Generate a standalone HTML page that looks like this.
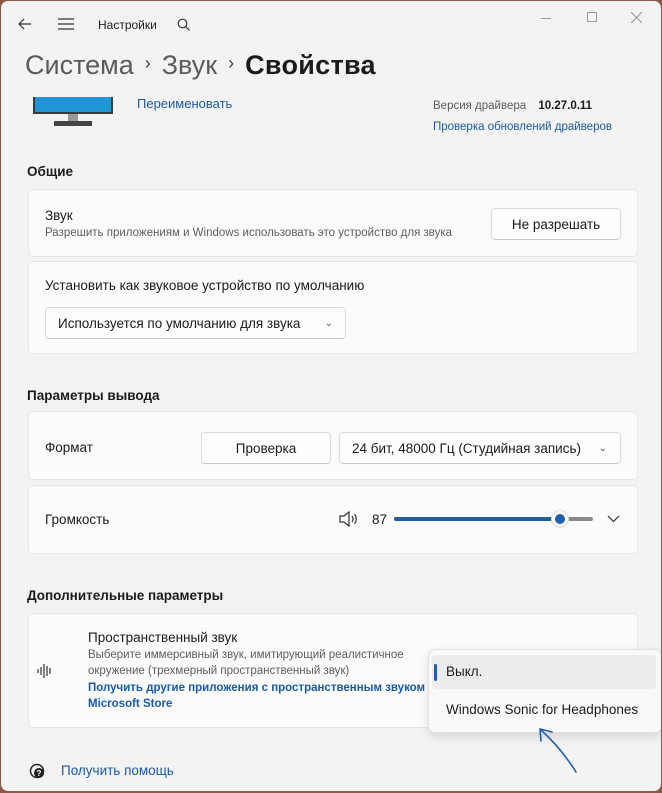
<!DOCTYPE html>
<html><head><meta charset="utf-8"><style>
*{margin:0;padding:0;box-sizing:border-box}
body{width:662px;height:793px;overflow:hidden;background:#8a5a44;font-family:"Liberation Sans",sans-serif;}
.win{position:absolute;left:1px;top:1px;width:660px;height:790px;background:#f3f3f3;border-radius:7px;overflow:hidden}
.a{position:absolute;white-space:nowrap}
.card{position:absolute;left:27px;width:610px;background:#fbfbfb;border:1px solid #e5e5e5;border-radius:5px}
.btn{position:absolute;background:#fdfdfd;border:1px solid #d9d9d9;border-bottom-color:#c8c8c8;border-radius:4px;font-size:13.5px;color:#1b1b1b;display:flex;align-items:center;justify-content:center}
.h{font-size:13.5px;font-weight:bold;color:#1b1b1b}
.t{font-size:13.5px;color:#1b1b1b}
.s{font-size:11.5px;color:#5d5d5d}
.l{color:#1a5aa8}
.chev{font-size:18px;position:relative;top:-5px;margin:0 11px;color:#444}
</style></head><body><div class="win">
<svg class="a" style="left:17px;top:16px" width="14" height="14" viewBox="0 0 14 14"><path d="M13 7H1M6 2L1 7l5 5" fill="none" stroke="#333" stroke-width="1.2"/></svg>
<svg class="a" style="left:57px;top:17px" width="16" height="12"><path d="M0 1h16M0 6h16M0 11h16" stroke="#333" stroke-width="1.2"/></svg>
<div class="a" style="left:97px;top:17px;font-size:12px;color:#1b1b1b">Настройки</div>
<svg class="a" style="left:176px;top:17px" width="13" height="13"><circle cx="5.5" cy="5.5" r="4.3" fill="none" stroke="#333" stroke-width="1.2"/><path d="M8.5 8.5l4 4" stroke="#333" stroke-width="1.2"/></svg>
<div class="a" style="left:540px;top:17px;width:10px;height:1px;background:#999"></div>
<div class="a" style="left:586px;top:11px;width:10px;height:10px;border:1px solid #999"></div>
<svg class="a" style="left:630px;top:11px" width="11" height="11"><path d="M0 0l11 11M11 0L0 11" stroke="#999"/></svg>
<div class="a" style="left:24px;top:49px;font-size:27px;color:#5b5b5b">Система<span class="chev">›</span>Звук<span class="chev">›</span><span style="color:#1b1b1b;font-weight:bold;letter-spacing:0.3px">Свойства</span></div>
<div class="a" style="left:32px;top:96px;width:80px;height:17px;background:#1e96d6;border:2px solid #3a3a3a;border-top:none"></div>
<div class="a" style="left:67px;top:113px;width:10px;height:8px;background:#999"></div>
<div class="a" style="left:53px;top:120px;width:38px;height:5px;background:#444"></div>
<div class="a l" style="left:136px;top:95px;font-size:13px">Переименовать</div>
<div class="a" style="left:432px;top:99px;font-size:11.5px;color:#5d5d5d">Версия драйвера <b style="color:#1b1b1b;margin-left:9px">10.27.0.11</b></div>
<div class="a l" style="left:432px;top:120px;font-size:11.5px">Проверка обновлений драйверов</div>
<div class="a h" style="left:26px;top:163px">Общие</div>
<div class="card" style="top:188px;height:68px"></div>
<div class="a t" style="left:44px;top:207px">Звук</div>
<div class="a s" style="left:44px;top:226px">Разрешить приложениям и Windows использовать это устройство для звука</div>
<div class="btn" style="left:490px;top:207px;width:130px;height:32px">Не разрешать</div>
<div class="card" style="top:260px;height:93px"></div>
<div class="a t" style="left:44px;top:277px">Установить как звуковое устройство по умолчанию</div>
<div class="btn" style="left:44px;top:306px;width:301px;height:32px;justify-content:flex-start;padding-left:12px">Используется по умолчанию для звука<span style="position:absolute;right:12px;font-size:10px;color:#555">⌄</span></div>
<div class="a h" style="left:26px;top:387px">Параметры вывода</div>
<div class="card" style="top:410px;height:69px"></div>
<div class="a t" style="left:44px;top:439px">Формат</div>
<div class="btn" style="left:200px;top:431px;width:130px;height:32px">Проверка</div>
<div class="btn" style="left:338px;top:431px;width:282px;height:32px;justify-content:flex-start;padding-left:12px">24 бит, 48000 Гц (Студийная запись)<span style="position:absolute;right:13px;font-size:10px;color:#555">⌄</span></div>
<div class="card" style="top:484px;height:69px"></div>
<div class="a t" style="left:44px;top:511px">Громкость</div>
<svg class="a" style="left:338px;top:510px" width="20" height="16"><path d="M1 5h4l5-4v14l-5-4H1z" fill="none" stroke="#333" stroke-width="1.2"/><path d="M13 5q2 3 0 6M15.5 3q3.5 5 0 10" fill="none" stroke="#333" stroke-width="1.2"/></svg>
<div class="a t" style="left:371px;top:511px">87</div>
<div class="a" style="left:393px;top:516px;width:199px;height:4px;background:#8a8a8a;border-radius:2px"></div>
<div class="a" style="left:393px;top:516px;width:166px;height:4px;background:#1f5fa8;border-radius:2px"></div>
<div class="a" style="left:550px;top:509px;width:18px;height:18px;border-radius:50%;background:#fff;border:1px solid #ddd"></div>
<div class="a" style="left:554px;top:513px;width:10px;height:10px;border-radius:50%;background:#1f5fa8"></div>
<svg class="a" style="left:606px;top:514px" width="13" height="8"><path d="M1 1l5.5 5.5L12 1" fill="none" stroke="#333" stroke-width="1.2"/></svg>
<div class="a h" style="left:26px;top:587px">Дополнительные параметры</div>
<div class="card" style="top:612px;height:115px"></div>
<svg class="a" style="left:36px;top:661px" width="16" height="18"><path d="M1 7v4M4 5v8M7 2v14M10 4v10M13 6v6" stroke="#333" stroke-width="1.2"/></svg>
<div class="a t" style="left:87px;top:629px">Пространственный звук</div>
<div class="a s" style="left:87px;top:648px">Выберите иммерсивный звук, имитирующий реалистичное</div>
<div class="a s" style="left:87px;top:664px">окружение (трехмерный пространственный звук)</div>
<div class="a l" style="left:87px;top:681px;font-size:11.5px;font-weight:bold">Получить другие приложения с пространственным звуком и</div>
<div class="a l" style="left:87px;top:697px;font-size:11.5px;font-weight:bold">Microsoft Store</div>
<div class="a" style="left:427px;top:648px;width:234px;height:84px;background:#f9f9f9;border:1px solid #e0e0e0;border-radius:7px;box-shadow:0 4px 10px rgba(0,0,0,.12)"></div>
<div class="a" style="left:431px;top:654px;width:224px;height:34px;background:#ececec;border-radius:4px"></div>
<div class="a" style="left:433px;top:663px;width:3px;height:17px;background:#1f5fa8;border-radius:2px"></div>
<div class="a t" style="left:445px;top:663px">Выкл.</div>
<div class="a t" style="left:445px;top:701px">Windows Sonic for Headphones</div>
<svg class="a" style="left:530px;top:722px" width="50" height="52"><path d="M45 49Q30 25 9 6M9 6l1 12M9 6l12 3" fill="none" stroke="#1f5fa8" stroke-width="1.6" stroke-linecap="round"/></svg>
<svg class="a" style="left:27px;top:761px" width="18" height="18"><circle cx="9" cy="9" r="6.5" fill="none" stroke="#222" stroke-width="1.5"/><circle cx="11" cy="11" r="5" fill="#222"/><text x="11" y="14" font-size="8" fill="#fff" text-anchor="middle" font-family="Liberation Sans" font-weight="bold">?</text></svg>
<div class="a l" style="left:60px;top:762px;font-size:13.5px">Получить помощь</div>
</div></body></html>
